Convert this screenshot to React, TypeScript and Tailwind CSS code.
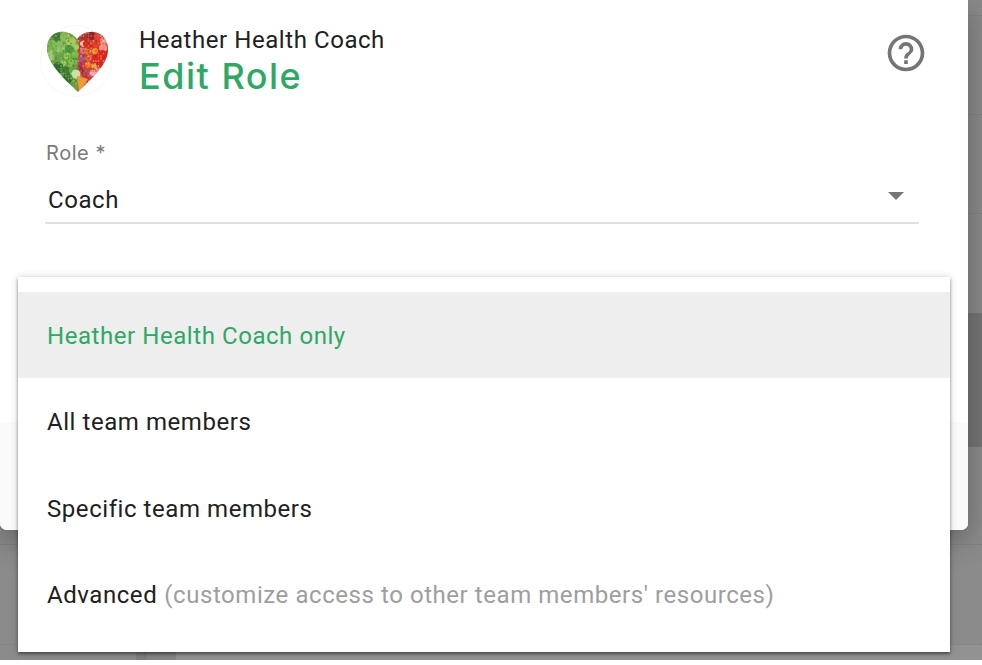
const menuItems = [
  { label: 'Heather Health Coach only', selected: true },
  { label: 'All team members' },
  { label: 'Specific team members' },
  { label: 'Advanced', hint: "(customize access to other team members' resources)" },
]

// [cx, cy, r, fill]
const greens: [number, number, number, string][] = [
  [17, 12, 5, '#3f7a38'], [25, 12, 5, '#8dbb55'], [31, 17, 5, '#a5c860'], [12, 21, 6, '#7ab255'],
  [20, 22, 6, '#86bb60'], [29, 24, 4, '#4d9a3a'], [36, 22, 3, '#9fd05f'], [11, 31, 5, '#93c068'],
  [19, 32, 5, '#6aa24a'], [27, 31, 3.5, '#8fce55'], [35, 30, 3.5, '#78bb4a'], [23, 38, 3, '#a2d066'],
  [31, 37, 3, '#86c24e'], [18, 43, 6, '#2f6a30'], [26, 46, 5, '#3f7f38'], [33, 45, 4, '#6aa648'],
  [27, 54, 5, '#2c6a2c'], [33, 52, 3, '#4c8a38'],
]
const reds: [number, number, number, string][] = [
  [44, 11, 4, '#a83032'], [51, 11, 4, '#8e2430'], [58, 12, 4, '#d9483a'], [64, 16, 4, '#ef9a92'],
  [43, 19, 3, '#e8c8b8'], [48, 19, 5, '#d8301f'], [56, 19, 4, '#e53b22'], [63, 23, 4, '#f0908a'],
  [43, 26, 3, '#c67a80'], [48, 27, 3, '#ee7a20'], [55, 26, 3, '#f39a20'], [62, 30, 5, '#d9201f'],
  [42, 33, 3, '#a05a90'], [48, 34, 3, '#dd6a30'], [55, 34, 4, '#e0281f'], [41, 39, 3, '#b84060'],
  [48, 40, 3, '#f07a20'], [54, 41, 3, '#f2a030'], [60, 39, 4, '#d0281f'], [40, 46, 4, '#a8283a'],
  [47, 47, 4, '#b84a58'], [53, 48, 3.5, '#e8a8a0'], [59, 46, 3.5, '#e89a90'], [48, 56, 3, '#c42848'],
  [52, 54, 3, '#d84060'],
]

const greenSpecks = ['#c2dc8e', '#4f8f3a', '#98c75e', '#2f6d2e', '#b5d67a', '#6fa846']
const redSpecks = ['#f7b0a0', '#8c2030', '#f08a2a', '#e23a28', '#c8607a', '#ffd0b0']

// small flecks so the fruit and veg read as texture instead of big blobs
const specks: [number, number, string][] = []
for (let y = 6; y < 66; y += 2.5) {
  for (let x = 6; x < 68; x += 2.5) {
    const n = Math.abs(Math.sin(x * 12.9898 + y * 78.233) * 43758.5453) % 1
    const palette = x < 38 ? greenSpecks : redSpecks
    if (n < 0.6) specks.push([x, y, palette[Math.floor(n * 10) % 6]])
  }
}

function HeartLogo() {
  return (
    <svg width="72" height="72" viewBox="0 0 72 72" className="shrink-0">
      <defs>
        <clipPath id="heart">
          <path d="M37 14C33 8 25 6 19 7 10 9 6 17 7 26c2 14 18 29 31 41 12-12 28-25 30-40 1-11-5-19-14-20-7-1-13 2-17 7z" />
        </clipPath>
        <filter id="soft">
          <feGaussianBlur stdDeviation="0.7" />
        </filter>
      </defs>
      <circle cx="36" cy="36" r="35.5" fill="#fff" stroke="#f1f5f3" strokeWidth="0.7" />
      <g clipPath="url(#heart)">
        <g filter="url(#soft)">
          <rect x="0" y="0" width="38" height="72" fill="#6a9f42" />
          <rect x="38" y="0" width="34" height="72" fill="#c93a30" />
          {greens.concat(reds).map(([cx, cy, r, fill], i) => (
            <circle key={i} cx={cx} cy={cy} r={r} fill={fill} />
          ))}
          {specks.map(([cx, cy, fill], i) => (
            <circle key={i} cx={cx} cy={cy} r="0.9" fill={fill} opacity="0.55" />
          ))}
          <circle cx="36" cy="49" r="4.5" fill="#c9e0a0" />
          <path d="M37 51l11 3-9 14z" fill="#ee9a35" />
        </g>
      </g>
    </svg>
  )
}

function HelpIcon() {
  return (
    <svg width="44" height="44" viewBox="0 0 24 24" fill="#757575">
      <path d="M11 18h2v-2h-2v2zm1-16C6.48 2 2 6.48 2 12s4.48 10 10 10 10-4.48 10-10S17.52 2 12 2zm0 18c-4.41 0-8-3.59-8-8s3.59-8 8-8 8 3.59 8 8-3.590 8-8 8zm0-14c-2.210 0-4 1.790-4 4h2c0-1.100.9-2 2-2s2 .9 2 2c0 2-3 1.750-3 5h2c0-2.250 3-2.500 3-5 0-2.210-1.790-4-4-4z" />
    </svg>
  )
}

function Backdrop() {
  return (
    <div className="flex flex-col h-[660px] bg-[#8b8b8b]">
      <div className="h-[313px] bg-[#8a8a8a] flex flex-col">
        <div className="h-[16px] border-b border-dotted border-[#7c7c7c]" />
        <div className="h-[99px] border-b border-dotted border-[#7c7c7c]" />
        <div className="h-[99px] border-b border-dotted border-[#7c7c7c]" />
      </div>
      <div className="h-[134px] bg-[#757575]" />
      <div className="h-[98px] border-b border-dotted border-[#7c7c7c]" />
      <div className="h-[100px] border-b border-dotted border-[#808080]" />
      <div className="flex-1 flex">
        <div className="w-[136px]" />
        <div className="w-[11px] bg-[#7e7e7e]" />
        <div className="w-[29px] bg-[#858585]" />
        <div className="flex-1 bg-[#929292]" />
      </div>
    </div>
  )
}

export default function App() {
  return (
    <div className="relative w-[982px] h-[665px] overflow-hidden bg-white font-['Roboto',sans-serif] text-[#212121] tracking-[0.56px]">
      <Backdrop />

      {/* Dialog */}
      <div className="absolute left-0 top-0 w-[968px] h-[530px] flex flex-col bg-white rounded-b-[7px] shadow-[0_10px_30px_rgba(0,0,0,0.3)]">
        <div className="flex-1 pl-[40px] pr-[49px] pt-[25px]">
          <div className="flex items-start">
            <HeartLogo />
            <div className="ml-[27px] flex-1">
              <div className="text-[24px] leading-[28px] mt-[1px]">Heather Health Coach</div>
              <div className="font-['Inter',sans-serif] font-medium text-[36px] leading-[42px] mt-[1px] tracking-[1.5px] text-[#2fa866]">
                Edit Role
              </div>
            </div>
            <div className="-mr-[9px] mt-[6px]">
              <HelpIcon />
            </div>
          </div>

          <div className="ml-[5px] mt-[44px]">
            <div className="pl-[1px] font-['Inter',sans-serif] text-[20px] leading-[24px] mb-[12px] text-[#7a7a7a]">Role *</div>
            <div className="flex items-center justify-between h-[47px] pl-[3px] pr-[15px] border-b-2 border-[#e0e0e0]">
              <span className="text-[24px]">Coach</span>
              <span className="mb-[7px] w-0 h-0 border-x-[8px] border-x-transparent border-t-[8px] border-t-[#757575]" />
            </div>
          </div>
        </div>
        <div className="h-[108px] bg-[#fafafa] rounded-b-[7px]" />
      </div>

      {/* Select menu */}
      <div className="absolute left-[18px] top-[277px] w-[932px] h-[375px] pt-[15px] bg-white shadow-[0_2px_3px_rgba(0,0,0,0.45),0_0_8px_rgba(0,0,0,0.15)]">
        {menuItems.map((item) => (
          <div
            key={item.label}
            className={
              item.selected
                ? 'h-[86px] pt-[2px] pl-[29px] flex items-center text-[24px] bg-[#eeeeee] text-[#2fa866]'
                : 'h-[86.5px] pt-[2px] pl-[29px] flex items-center text-[24px]'
            }
          >
            {item.label}
            {item.hint && <span className="ml-[7px] text-[#9e9e9e]">{item.hint}</span>}
          </div>
        ))}
      </div>
    </div>
  )
}
